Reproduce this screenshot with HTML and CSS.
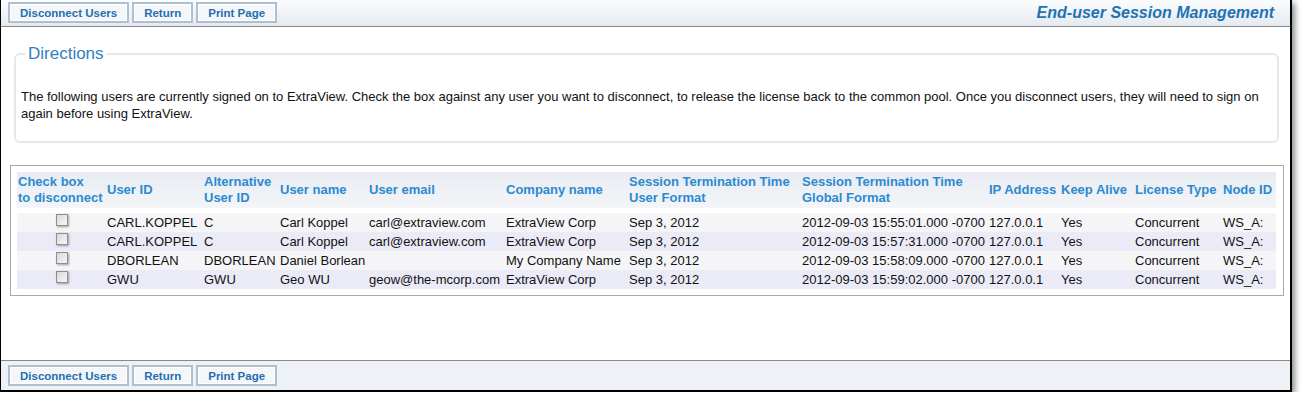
FILE: index.html
```html
<!DOCTYPE html>
<html lang="en">
<head>
    <meta charset="UTF-8">
    <title>End-user Session Management</title>
    <link rel="stylesheet" href="styles.css">
</head>
<body>
    <div class="frame">
        <div class="toolbar top">
            <div class="buttons">
                <button class="btn">Disconnect Users</button>
                <button class="btn">Return</button>
                <button class="btn">Print Page</button>
            </div>
            <div class="page-title">End-user Session Management</div>
        </div>

        <div class="main">
            <fieldset class="directions">
                <legend>Directions</legend>
                <p>The following users are currently signed on to ExtraView. Check the box against any user you want to disconnect, to release the license back to the common pool. Once you disconnect users, they will need to sign on again before using ExtraView.</p>
            </fieldset>

            <div class="grid-box">
                <table class="grid">
                    <colgroup>
                        <col style="width:89px"><col style="width:97px"><col style="width:76px"><col style="width:89px">
                        <col style="width:137px"><col style="width:123px"><col style="width:173px"><col style="width:187px">
                        <col style="width:72px"><col style="width:74px"><col style="width:88px"><col style="width:54px">
                    </colgroup>
                    <thead>
                        <tr>
                            <th>Check box<br>to disconnect</th>
                            <th>User ID</th>
                            <th>Alternative<br>User ID</th>
                            <th>User name</th>
                            <th>User email</th>
                            <th>Company name</th>
                            <th>Session Termination Time<br>User Format</th>
                            <th>Session Termination Time<br>Global Format</th>
                            <th>IP Address</th>
                            <th>Keep Alive</th>
                            <th>License Type</th>
                            <th>Node ID</th>
                        </tr>
                    </thead>
                    <tbody>
                        <tr>
                            <td class="check"><input type="checkbox"></td>
                            <td>CARL.KOPPEL</td><td>C</td><td>Carl Koppel</td><td>carl@extraview.com</td>
                            <td>ExtraView Corp</td><td>Sep 3, 2012</td><td>2012-09-03 15:55:01.000 -0700</td>
                            <td>127.0.0.1</td><td>Yes</td><td>Concurrent</td><td>WS_A:</td>
                        </tr>
                        <tr>
                            <td class="check"><input type="checkbox"></td>
                            <td>CARL.KOPPEL</td><td>C</td><td>Carl Koppel</td><td>carl@extraview.com</td>
                            <td>ExtraView Corp</td><td>Sep 3, 2012</td><td>2012-09-03 15:57:31.000 -0700</td>
                            <td>127.0.0.1</td><td>Yes</td><td>Concurrent</td><td>WS_A:</td>
                        </tr>
                        <tr>
                            <td class="check"><input type="checkbox"></td>
                            <td>DBORLEAN</td><td>DBORLEAN</td><td>Daniel Borlean</td><td></td>
                            <td>My Company Name</td><td>Sep 3, 2012</td><td>2012-09-03 15:58:09.000 -0700</td>
                            <td>127.0.0.1</td><td>Yes</td><td>Concurrent</td><td>WS_A:</td>
                        </tr>
                        <tr>
                            <td class="check"><input type="checkbox"></td>
                            <td>GWU</td><td>GWU</td><td>Geo WU</td><td>geow@the-mcorp.com</td>
                            <td>ExtraView Corp</td><td>Sep 3, 2012</td><td>2012-09-03 15:59:02.000 -0700</td>
                            <td>127.0.0.1</td><td>Yes</td><td>Concurrent</td><td>WS_A:</td>
                        </tr>
                    </tbody>
                </table>
            </div>
        </div>

        <div class="toolbar bottom">
            <div class="buttons">
                <button class="btn">Disconnect Users</button>
                <button class="btn">Return</button>
                <button class="btn">Print Page</button>
            </div>
        </div>
    </div>
</body>
</html>
```

FILE: styles.css
```css
* {
    box-sizing: border-box;
}

body {
    margin: 0;
    background: #fff;
    font-family: 'Liberation Sans', Arial, sans-serif;
    color: #111;
}

.frame {
    width: 1292px;
    height: 392px;
    display: flex;
    flex-direction: column;
    border-left: 1px solid #000;
    border-right: 2px solid #000;
    border-bottom: 2px solid #000;
    box-shadow: 3px 3px 6px rgba(0, 0, 0, 0.45);
    background: #fff;
}

.toolbar {
    display: flex;
    align-items: center;
    justify-content: space-between;
    background: linear-gradient(#fbfcfd, #e4eaf1);
}

.toolbar.top {
    height: 27px;
    padding: 0 16px 1px 7px;
    border-bottom: 1px solid #8a8a8a;
}

.toolbar.bottom {
    height: 30px;
    padding: 0 16px 0 7px;
    border-top: 1px solid #8a8a8a;
    background: #eef1f6;
}

.buttons {
    display: flex;
    gap: 3px;
}

.btn {
    height: 21px;
    padding: 0 10px;
    font-family: 'Liberation Sans', Arial, sans-serif;
    font-size: 11.5px;
    font-weight: bold;
    color: #1f6fb2;
    background: #f4f6f8;
    border: 2px solid #adc0cf;
    box-shadow: inset 0 0 0 1px #fff;
    border-radius: 0;
}

.page-title {
    font-size: 16px;
    font-weight: bold;
    font-style: italic;
    color: #1f72b4;
    padding-top: 1px;
}

.main {
    flex: 1;
    padding: 17px 6px 0 9px;
}

.directions {
    margin: 0 5px 0 4px;
    padding: 24px 5px 19px 5px;
    border: 2px solid #e8e8e8;
    border-radius: 6px;
}

.directions legend {
    font-size: 17px;
    color: #3280c0;
    padding: 0 2px;
    margin-left: 5px;
    line-height: 20px;
}

.directions p {
    margin: 0;
    font-size: 13px;
    line-height: 17px;
}

.grid-box {
    margin-top: 22px;
    border: 1px solid #a9a9a9;
    padding: 6px;
}

.grid {
    table-layout: fixed;
    width: 1259px;
    border-collapse: separate;
    border-spacing: 0;
}

.grid th {
    height: 41px;
    padding: 0 1px;
    text-align: left;
    vertical-align: middle;
    font-size: 13px;
    line-height: 16.5px;
    color: #2c8ad0;
    white-space: nowrap;
    background: linear-gradient(#e8ecf2, #f3f5f8);
    background-clip: padding-box;
    border-bottom: 5px solid #fff;
}

.grid td {
    height: 19px;
    padding: 0 1px;
    font-size: 13px;
    line-height: 19px;
    white-space: nowrap;
    overflow: hidden;
}

.grid tbody tr:nth-child(odd) { background: #f5f5f8; }
.grid tbody tr:nth-child(even) { background: #ebebf8; }

.grid td.check {
    text-align: center;
    vertical-align: top;
    padding-top: 1px;
    line-height: 12px;
}

.check input {
    appearance: none;
    width: 12px;
    height: 12px;
    margin: 0;
    border: 1px solid #8e8e8e;
    background: linear-gradient(135deg, #d8d8d8, #f8f8f8);
    box-shadow: 1px 1px 2px rgba(0, 0, 0, 0.35);
}
```
